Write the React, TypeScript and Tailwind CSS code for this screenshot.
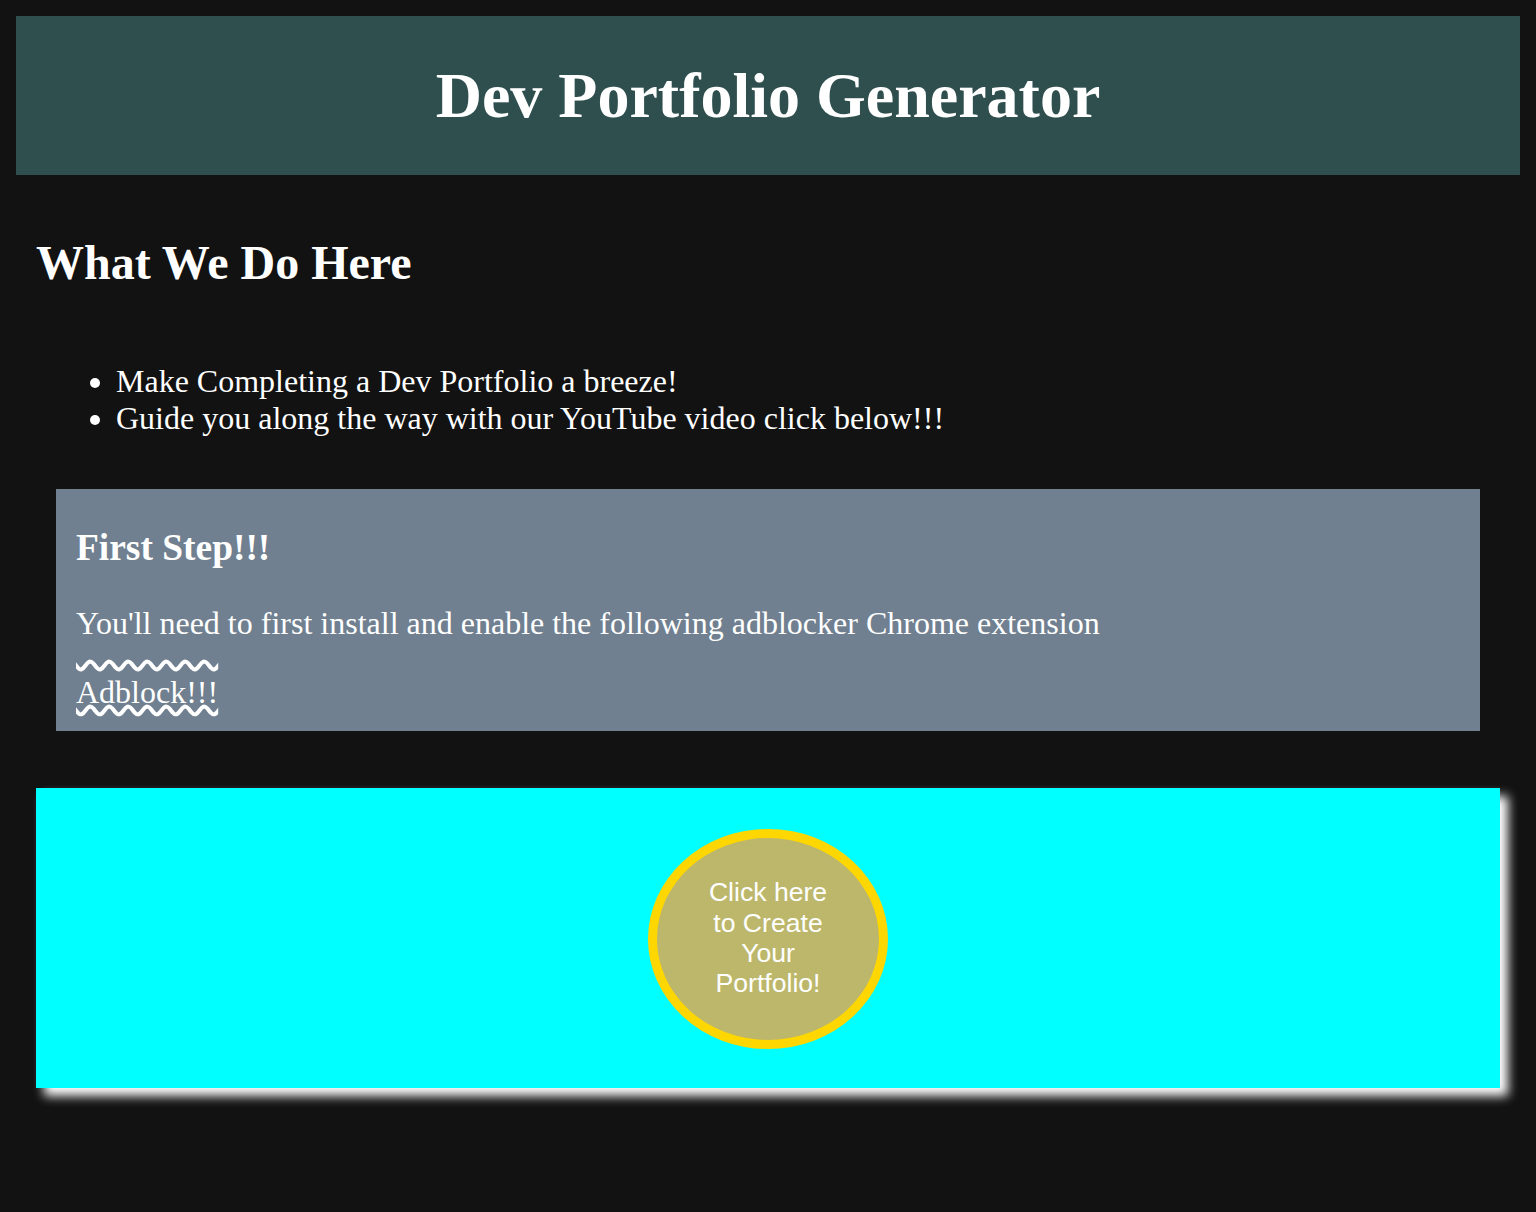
import React from "react";

export default function App() {
  return (
    <div
      className="min-h-[1212px] bg-[#121212] p-4 text-white"
      style={{ fontFamily: '"Liberation Serif", "Times New Roman", serif' }}
    >
      <header className="flex h-[159px] items-center justify-center bg-[#2F4F4F]">
        <h1 className="text-[64px] font-bold leading-[1.15]">Dev Portfolio Generator</h1>
      </header>

      <section className="px-5">
        <h2 className="mt-[60px] text-[48px] font-bold leading-[1.15]">What We Do Here</h2>
        <ul className="mt-[73px] list-disc pl-[80px] text-[32px] leading-[1.15]">
          <li>Make Completing a Dev Portfolio a breeze!</li>
          <li>Guide you along the way with our YouTube video click below!!!</li>
        </ul>

        <div className="mx-5 mt-[52px] bg-[#708090] px-5 pb-[21px] pt-[37px]">
          <h3 className="text-[37.44px] font-bold leading-[1.15]">First Step!!!</h3>
          <p className="mt-[36px] text-[32px] leading-[1.15]">
            You'll need to first install and enable the following adblocker Chrome extension
          </p>
          <a
            href="#"
            className="mt-[32px] inline-block text-[32px] leading-[1.15] text-white"
            style={{
              textDecorationLine: "underline overline",
              textDecorationStyle: "wavy",
              textDecorationColor: "#fff",
              textDecorationThickness: "3.5px",
            }}
          >
            Adblock!!!
          </a>
        </div>

        <div className="mt-[57px] flex h-[300px] items-center justify-center bg-[#00FFFF] shadow-[8px_8px_10px_#ffffff]">
          <button
            className="mt-[2px] flex h-[220px] w-[240px] items-center justify-center rounded-[50%] border-[9px] border-[#FFD700] bg-[#BDB76B] text-center text-[26.6px] leading-[30.4px] text-white"
            style={{ fontFamily: '"Liberation Sans", Arial, sans-serif' }}
          >
            <span className="-mt-[3px] block w-[132px]">Click here to Create Your Portfolio!</span>
          </button>
        </div>
      </section>
    </div>
  );
}
